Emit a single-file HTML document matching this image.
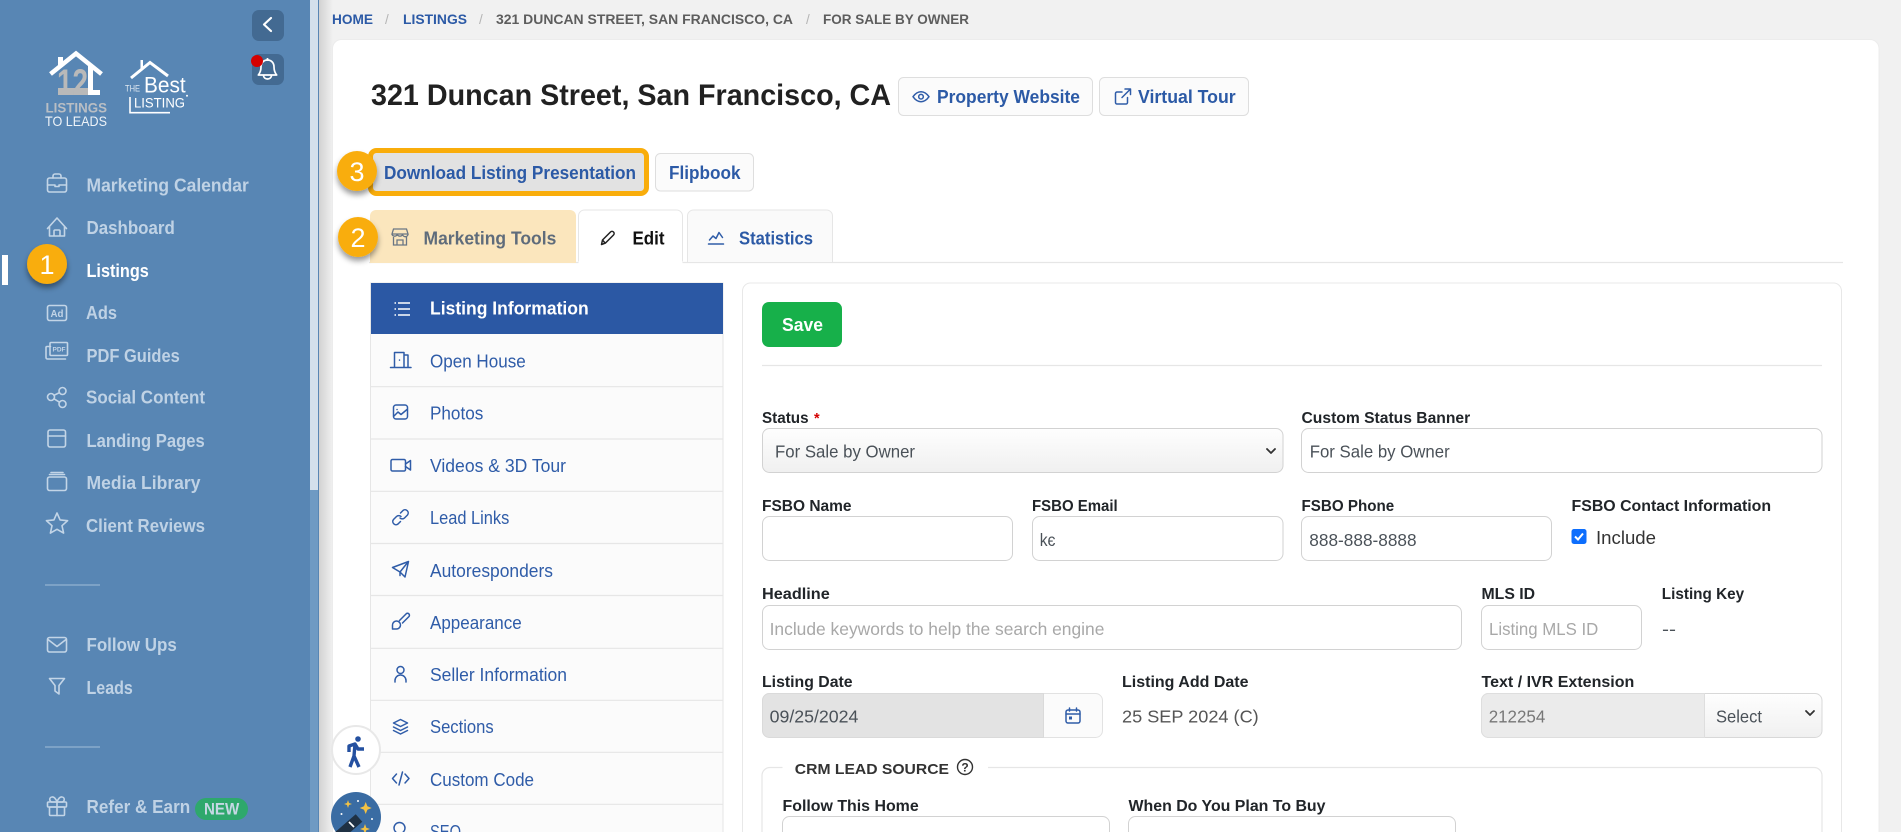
<!DOCTYPE html>
<html lang="en">
<head>
<meta charset="utf-8">
<title>321 Duncan Street, San Francisco, CA</title>
<style>
html,body{margin:0;padding:0;width:1901px;height:832px;overflow:hidden;background:#f1f1f1}
svg{display:block;position:absolute;left:0;top:0}
text{font-family:"Liberation Sans",sans-serif;white-space:pre}
.s{font-size:18.500px;font-weight:700;fill:#bfd2e5}
.n{font-size:18.500px;fill:#2f5ca8}
.l{font-size:15.500px;font-weight:700;fill:#212529}
.v{font-size:17.500px;fill:#4a5158}
.p{font-size:17.500px;fill:#a8a8a8}
.bl{font-size:18.500px;font-weight:700;fill:#2c5aa6}
.c{font-size:13.500px;font-weight:700;fill:#5d5d5d}
.d{font-size:27px;fill:#fff;text-anchor:middle}
.box{fill:#fff;stroke:#d2d2d2;stroke-width:1}
.si{fill:none;stroke:#c3d5e7;stroke-width:1.6;stroke-linecap:round;stroke-linejoin:round}
.ni{fill:none;stroke:#2f5ca8;stroke-width:1.5;stroke-linecap:round;stroke-linejoin:round}
.sep{stroke:#e6e6e6;stroke-width:1.2}
</style>
</head>
<body>
<svg width="1901" height="832" viewBox="0 0 1901 832" xmlns="http://www.w3.org/2000/svg">
<defs>
<linearGradient id="sh" x1="0" x2="1" y1="0" y2="0"><stop offset="0" stop-color="#d2d2d2"/><stop offset="1" stop-color="#f1f1f1"/></linearGradient>
<linearGradient id="sel" x1="0" x2="0" y1="0" y2="1"><stop offset="0" stop-color="#fefefe"/><stop offset="1" stop-color="#f0f0f0"/></linearGradient>
<filter id="ds" x="-40%" y="-40%" width="180%" height="180%"><feDropShadow dx="0" dy="4" stdDeviation="3" flood-color="#000" flood-opacity=".4"/></filter>
</defs>

<!-- page -->
<rect width="1901" height="832" fill="#f1f1f1"/>
<rect x="319" y="0" width="14" height="832" fill="url(#sh)"/>

<!-- sidebar -->
<rect x="0" y="0" width="310" height="832" fill="#5886b4"/>
<rect x="310" y="0" width="8" height="832" fill="#6f9ac3"/>
<rect x="310" y="0" width="8" height="490" fill="#d3e0ec"/>
<rect x="318" y="0" width="1" height="832" fill="#5886b4"/>

<rect x="252" y="10" width="32" height="31" rx="7" fill="#436a92"/>
<path d="M271 18L264 24.5L271 31" fill="none" stroke="#fff" stroke-width="2.2" stroke-linecap="round" stroke-linejoin="round"/>
<rect x="252" y="54" width="32" height="31" rx="7" fill="#436a92"/>
<path d="M267.500 60c-4 0-6.500 3-6.500 7c0 4-1 6-2.700 8h18.400c-1.700-2-2.700-4-2.700-8c0-4-2.500-7-6.500-7zM267.500 60v-2M263.500 75.500a4 3.500 0 0 0 8 0" fill="none" stroke="#fff" stroke-width="1.700" stroke-linejoin="round"/>
<circle cx="257" cy="61" r="6" fill="#d40000"/>

<!-- logos -->
<rect x="58" y="88" width="30" height="7" fill="#b9b9b9"/>
<text x="57" y="95" font-size="37" font-weight="700" fill="#b9b9b9" textLength="31" lengthAdjust="spacingAndGlyphs">12</text>
<path d="M88 66h5v24h7v5h-12z" fill="#fff"/>
<path d="M50.500 74L76 53.500L101.500 74" fill="none" stroke="#fff" stroke-width="4.500"/>
<rect x="58" y="57" width="5" height="10" fill="#fff"/>
<text x="45.500" y="112.700" font-size="14" font-weight="700" fill="#b9bec4" textLength="61.500" lengthAdjust="spacingAndGlyphs">LISTINGS</text>
<text x="45" y="126" font-size="14" fill="#eef3f8" textLength="62" lengthAdjust="spacingAndGlyphs">TO LEADS</text>
<path d="M131 78L150 62.500L168 76" fill="none" stroke="#fff" stroke-width="3"/>
<rect x="140.500" y="60" width="2.500" height="10" fill="#fff"/>
<text x="125" y="91.700" font-size="9.500" fill="#dfe8f1" textLength="15" lengthAdjust="spacingAndGlyphs">THE</text>
<text x="144" y="92.700" font-size="22" fill="#fff" textLength="41.700" lengthAdjust="spacingAndGlyphs">Best</text>
<text x="134" y="107.300" font-size="14" fill="#fff" textLength="51" lengthAdjust="spacingAndGlyphs">LISTING</text>
<circle cx="187" cy="95.700" r="1" fill="#fff"/>
<path d="M130 97v15.700h40" fill="none" stroke="#fff" stroke-width="1.600"/>

<!-- sidebar icons -->
<g class="si">
<rect x="47.500" y="178" width="19" height="14" rx="2"/><path d="M53 178v-2a2 2 0 0 1 2-2h4a2 2 0 0 1 2 2v2M47.500 185h7.500v1.500h4v-1.500h7.500"/>
<path d="M47.500 228.500L57 218l9.500 10.500M49.500 226.500v9.500h15v-9.500M54 236v-5a1 1 0 0 1 1-1h4a1 1 0 0 1 1 1v5"/>
<rect x="47.500" y="305.500" width="19" height="15" rx="2"/>
<path d="M50.500 346.500h-3.500a1 1 0 0 0-1 1v10a1.500 1.500 0 0 0 1.500 1.500h18M50 344v-0.500a1 1 0 0 1 1-1h15.500a1 1 0 0 1 1 1v11a1 1 0 0 1-1 1h-15.500a1 1 0 0 1-1-1z"/>
<circle cx="62.500" cy="391" r="3.500"/><circle cx="51" cy="397" r="3.500"/><circle cx="62.500" cy="404" r="3.500"/><path d="M54 395.300l5.500-2.700M54 398.800l5.500 3.400"/>
<rect x="48" y="430" width="17.500" height="17" rx="2"/><path d="M48 436h17.500"/>
<rect x="47.500" y="477" width="19" height="13.500" rx="2"/><path d="M49.500 474.500h15M51 472.500h12"/>
<path d="M57 513l3.100 6.900 7.500.8-5.600 5 1.600 7.400-6.600-3.800-6.600 3.800 1.600-7.400-5.600-5 7.500-.8z"/>
<rect x="47.500" y="637.500" width="19" height="14.500" rx="2"/><path d="M48 639.500l9 7 9-7"/>
<path d="M49.500 678.500h15l-5.500 7v8.500l-4-3v-5.500z"/>
<rect x="47.500" y="802" width="19" height="5" rx="1"/><rect x="49.500" y="807" width="15" height="8.500" rx="1"/><path d="M57 802v13.500M57 802c-1-3-3-5.500-5-5a2.500 2.500 0 0 0 .5 5zM57 802c1-3 3-5.500 5-5a2.500 2.500 0 0 1-.5 5z"/>
</g>
<text x="50.500" y="317" font-size="10" font-weight="700" fill="#c3d5e7" textLength="13" lengthAdjust="spacingAndGlyphs">Ad</text>
<text x="52.500" y="351.500" font-size="6.500" font-weight="700" fill="#c3d5e7" textLength="13" lengthAdjust="spacingAndGlyphs">PDF</text>

<text class="s" x="86.500" y="191.500" textLength="162.300" lengthAdjust="spacingAndGlyphs">Marketing Calendar</text>
<text class="s" x="86.500" y="234" textLength="88.300" lengthAdjust="spacingAndGlyphs">Dashboard</text>
<text class="s" x="86.500" y="277" textLength="62.300" lengthAdjust="spacingAndGlyphs" style="fill:#fff">Listings</text>
<text class="s" x="86" y="319" textLength="31" lengthAdjust="spacingAndGlyphs">Ads</text>
<text class="s" x="86.500" y="362" textLength="93.300" lengthAdjust="spacingAndGlyphs">PDF Guides</text>
<text class="s" x="86" y="403.500" textLength="119" lengthAdjust="spacingAndGlyphs">Social Content</text>
<text class="s" x="86.500" y="447" textLength="118.300" lengthAdjust="spacingAndGlyphs">Landing Pages</text>
<text class="s" x="86.500" y="489" textLength="114" lengthAdjust="spacingAndGlyphs">Media Library</text>
<text class="s" x="86" y="532" textLength="119" lengthAdjust="spacingAndGlyphs">Client Reviews</text>
<rect x="45" y="584" width="55" height="2" fill="#7da2c6"/>
<text class="s" x="86.500" y="651" textLength="90.300" lengthAdjust="spacingAndGlyphs">Follow Ups</text>
<text class="s" x="86.500" y="694" textLength="46.300" lengthAdjust="spacingAndGlyphs">Leads</text>
<rect x="45" y="746" width="55" height="2" fill="#7da2c6"/>
<text class="s" x="86.500" y="813" textLength="103.700" lengthAdjust="spacingAndGlyphs">Refer &amp; Earn</text>
<rect x="195" y="798" width="53" height="22" rx="11" fill="#2ea86c"/>
<text x="204" y="814.500" font-size="16.500" font-weight="700" fill="#c5d8e4" textLength="35.300" lengthAdjust="spacingAndGlyphs">NEW</text>

<rect x="2" y="255" width="6" height="30" fill="#fff"/>

<!-- breadcrumb -->
<text class="c" x="332" y="24" textLength="41" lengthAdjust="spacingAndGlyphs" style="fill:#2c5aa6">HOME</text>
<text class="c" x="385" y="24" style="font-weight:400;fill:#b5b5b5">/</text>
<text class="c" x="403" y="24" textLength="64" lengthAdjust="spacingAndGlyphs" style="fill:#2c5aa6">LISTINGS</text>
<text class="c" x="479" y="24" style="font-weight:400;fill:#b5b5b5">/</text>
<text class="c" x="496" y="24" textLength="297" lengthAdjust="spacingAndGlyphs">321 DUNCAN STREET, SAN FRANCISCO, CA</text>
<text class="c" x="806" y="24" style="font-weight:400;fill:#b5b5b5">/</text>
<text class="c" x="823" y="24" textLength="146" lengthAdjust="spacingAndGlyphs">FOR SALE BY OWNER</text>

<!-- card -->
<rect x="332.500" y="39.500" width="1546.500" height="830" rx="9" fill="#fff" stroke="#ececec"/>

<text x="371" y="105" font-size="30" font-weight="700" fill="#212121" textLength="520" lengthAdjust="spacingAndGlyphs">321 Duncan Street, San Francisco, CA</text>

<rect x="898.500" y="77.500" width="194" height="38" rx="5" fill="#fbfbfb" stroke="#dedede"/>
<path d="M913 96.700c2.300-3.300 5-5 8-5s5.700 1.700 8 5c-2.300 3.300-5 5-8 5s-5.700-1.700-8-5z" class="ni"/><circle cx="921" cy="96.700" r="2.300" class="ni"/>
<text class="bl" x="937" y="103" textLength="143" lengthAdjust="spacingAndGlyphs">Property Website</text>
<rect x="1099.500" y="77.500" width="149" height="38" rx="5" fill="#fbfbfb" stroke="#dedede"/>
<path d="M1122 92h-5a1.500 1.500 0 0 0-1.500 1.500v9a1.500 1.500 0 0 0 1.500 1.500h9a1.500 1.500 0 0 0 1.500-1.500v-5M1122 97.500l8.500-8.500M1125 89h5.500v5.500" class="ni"/>
<text class="bl" x="1138" y="103" textLength="97.700" lengthAdjust="spacingAndGlyphs">Virtual Tour</text>

<!-- action buttons -->
<rect x="370.500" y="150.500" width="276" height="43" rx="6" fill="#e2e2e2" stroke="#f9ad0b" stroke-width="5"/>
<text class="bl" x="384" y="179" textLength="252" lengthAdjust="spacingAndGlyphs">Download Listing Presentation</text>
<rect x="655.500" y="153.500" width="98" height="37.500" rx="5" fill="#fbfbfb" stroke="#dedede"/>
<text class="bl" x="669" y="179" textLength="71.500" lengthAdjust="spacingAndGlyphs">Flipbook</text>

<!-- tabs -->
<path d="M369 262.500H1843" class="sep"/>
<path d="M370 263v-47a6 6 0 0 1 6-6h194a6 6 0 0 1 6 6v47z" fill="#fbe6bd"/>
<path d="M578.500 263v-47a6 6 0 0 1 6-6h92a6 6 0 0 1 6 6v47" fill="#fff" stroke="#e6e6e6"/>
<rect x="578.500" y="261" width="104" height="3" fill="#fff"/>
<path d="M687.500 262v-46a6 6 0 0 1 6-6h133a6 6 0 0 1 6 6v46" fill="#fafafa" stroke="#e6e6e6"/>
<path d="M393.500 229h13l1.500 5h-16zM392 234a2.700 2.700 0 0 0 5.300 0a2.700 2.700 0 0 0 5.300 0a2.700 2.700 0 0 0 5.400 0M393.500 237v8h13v-8M397 245v-5h6v5" fill="none" stroke="#6a7684" stroke-width="1.300"/>
<text x="423.500" y="244.500" font-size="18.500" font-weight="700" fill="#5f6c7b" textLength="132.800" lengthAdjust="spacingAndGlyphs">Marketing Tools</text>
<path d="M601.500 244.500l1-4.500 8-8a2.100 2.100 0 0 1 3 3l-8 8zM602.500 240l3 3.500" fill="none" stroke="#222" stroke-width="1.500" stroke-linejoin="round"/>
<text x="632.500" y="244.500" font-size="18.500" font-weight="700" fill="#111" textLength="32" lengthAdjust="spacingAndGlyphs">Edit</text>
<path d="M709.500 240l3.500-4 3 2.500 3-6 3.500 5M708.500 244h15" class="ni"/>
<text x="739" y="244.500" font-size="18.500" font-weight="700" fill="#2c5aa6" textLength="74" lengthAdjust="spacingAndGlyphs">Statistics</text>

<!-- left list -->
<rect x="370.500" y="283" width="352.500" height="560" fill="#fbfbfb" stroke="#e6e6e6"/>
<rect x="371" y="283" width="352" height="51" fill="#2b58a4"/>
<path d="M398 303h12M398 309h12M398 315h12" stroke="#fff" stroke-width="1.400"/>
<path d="M394.500 303h1.500M394.500 309h1.500M394.500 315h1.500" stroke="#fff" stroke-width="1.600"/>
<text x="430" y="314.500" font-size="18.500" font-weight="700" fill="#fff" textLength="158.700" lengthAdjust="spacingAndGlyphs">Listing Information</text>
<g class="sep"><path d="M371 386.700H723M371 439H723M371 491.300H723M371 543.500H723M371 595.500H723M371 648.300H723M371 700.300H723M371 752.300H723M371 804.300H723"/></g>

<g class="ni">
<path d="M390.500 367.500h20.500M394.500 367v-14.500h9.500v14.500M404 355h4v12M399.500 360v.1"/>
<rect x="393.500" y="405" width="14" height="14" rx="2.500"/><path d="M394 416l4-4 3 2.500 6-5M397 409.500h.1"/>
<rect x="391" y="459.500" width="14.500" height="11.500" rx="1.500"/><path d="M405.500 464l5-3.500v9.500l-5-3.500"/>
<path d="M400.500 513l2.500-2.500a3.200 3.200 0 0 1 4.500 4.500l-3 3a3.200 3.200 0 0 1-4.500 0M401 516.500a3.200 3.200 0 0 0-4.500 0l-3 3a3.200 3.200 0 0 0 4.500 4.500l2.500-2.500"/>
<path d="M392.500 567.500l16-6-3.500 15.500-5-5zM400 572l8-10M400 572v3.500"/>
<path d="M399.500 620.500l6.500-6.500a1.800 1.800 0 0 1 3 2.500l-6.500 6.500M392.500 629v-4a4 4 0 1 1 4 4z"/>
<circle cx="400.500" cy="670" r="3.500"/><path d="M395 682v-1.500a5.500 5.500 0 0 1 11 0v1.500"/>
<path d="M400.500 719.500l7 3.500-7 3.500-7-3.500zM393.500 727l7 3.500 7-3.500M393.500 730.500l7 3.500 7-3.500"/>
<path d="M396.500 774l-4 4.500 4 4.500M405 774l4 4.500-4 4.500M402.500 772l-3.500 13"/>
<circle cx="399.500" cy="828" r="5.500"/><path d="M403.500 832l3.500 3.500"/>
</g>

<text class="n" x="430" y="367.500" textLength="95.700" lengthAdjust="spacingAndGlyphs">Open House</text>
<text class="n" x="430" y="419.500" textLength="53.300" lengthAdjust="spacingAndGlyphs">Photos</text>
<text class="n" x="430" y="472" textLength="136" lengthAdjust="spacingAndGlyphs">Videos &amp; 3D Tour</text>
<text class="n" x="430" y="524" textLength="79.300" lengthAdjust="spacingAndGlyphs">Lead Links</text>
<text class="n" x="430" y="577" textLength="123" lengthAdjust="spacingAndGlyphs">Autoresponders</text>
<text class="n" x="430" y="629" textLength="91.700" lengthAdjust="spacingAndGlyphs">Appearance</text>
<text class="n" x="430" y="681" textLength="137" lengthAdjust="spacingAndGlyphs">Seller Information</text>
<text class="n" x="430" y="733" textLength="63.700" lengthAdjust="spacingAndGlyphs">Sections</text>
<text class="n" x="430" y="786" textLength="104" lengthAdjust="spacingAndGlyphs">Custom Code</text>
<text class="n" x="430" y="838" textLength="31" lengthAdjust="spacingAndGlyphs">SEO</text>

<!-- form panel -->
<rect x="742.500" y="283" width="1099" height="590" rx="8" fill="#fff" stroke="#e8e8e8"/>
<rect x="762" y="302" width="80" height="45" rx="7" fill="#17b04a"/>
<text x="782" y="331" font-size="18.500" font-weight="700" fill="#fff" textLength="41" lengthAdjust="spacingAndGlyphs">Save</text>
<path d="M762 365.500H1822" class="sep"/>

<text class="l" x="762" y="423" textLength="46.600" lengthAdjust="spacingAndGlyphs">Status</text>
<text x="814" y="423" font-size="14.500" font-weight="700" fill="#d40000">*</text>
<text class="l" x="1301.500" y="423" textLength="168.700" lengthAdjust="spacingAndGlyphs">Custom Status Banner</text>
<rect x="762.500" y="428.500" width="520.500" height="44" rx="7" fill="url(#sel)" stroke="#d2d2d2"/>
<text class="v" x="775" y="457.500" textLength="140" lengthAdjust="spacingAndGlyphs">For Sale by Owner</text>
<path d="M1267 449l4 4 4-4" fill="none" stroke="#333" stroke-width="1.800" stroke-linecap="round" stroke-linejoin="round"/>
<rect class="box" x="1301.500" y="428.500" width="520.500" height="44" rx="7"/>
<text class="v" x="1309.700" y="457.500" textLength="140" lengthAdjust="spacingAndGlyphs">For Sale by Owner</text>

<text class="l" x="762" y="511" textLength="89.500" lengthAdjust="spacingAndGlyphs">FSBO Name</text>
<text class="l" x="1032" y="511" textLength="85.700" lengthAdjust="spacingAndGlyphs">FSBO Email</text>
<text class="l" x="1301.500" y="511" textLength="92.700" lengthAdjust="spacingAndGlyphs">FSBO Phone</text>
<text class="l" x="1571.500" y="511" textLength="199.600" lengthAdjust="spacingAndGlyphs">FSBO Contact Information</text>
<rect class="box" x="762.500" y="516.500" width="250" height="44" rx="7"/>
<rect class="box" x="1032.500" y="516.500" width="250.500" height="44" rx="7"/>
<text class="v" x="1039.700" y="546" textLength="15.800" lengthAdjust="spacingAndGlyphs">kє</text>
<rect class="box" x="1301.500" y="516.500" width="250" height="44" rx="7"/>
<text class="v" x="1309.300" y="546" textLength="107.300" lengthAdjust="spacingAndGlyphs">888-888-8888</text>
<rect x="1571.500" y="529" width="15" height="15" rx="2.500" fill="#0d6efd"/>
<path d="M1575 536.500l3 3 5-6" fill="none" stroke="#fff" stroke-width="2"/>
<text x="1596" y="544" font-size="18.500" fill="#333" textLength="60" lengthAdjust="spacingAndGlyphs">Include</text>

<text class="l" x="762" y="599" textLength="67.800" lengthAdjust="spacingAndGlyphs">Headline</text>
<text class="l" x="1481.500" y="599" textLength="53.600" lengthAdjust="spacingAndGlyphs">MLS ID</text>
<text class="l" x="1661.800" y="599" textLength="82.300" lengthAdjust="spacingAndGlyphs">Listing Key</text>
<rect class="box" x="762.500" y="605.500" width="699" height="44" rx="7"/>
<text class="p" x="769.600" y="635" textLength="334.800" lengthAdjust="spacingAndGlyphs">Include keywords to help the search engine</text>
<rect class="box" x="1481.500" y="605.500" width="160" height="44" rx="7"/>
<text class="p" x="1489" y="635" textLength="109.300" lengthAdjust="spacingAndGlyphs">Listing MLS ID</text>
<text class="v" x="1662" y="635" textLength="14" lengthAdjust="spacingAndGlyphs">--</text>

<text class="l" x="762" y="687" textLength="90.600" lengthAdjust="spacingAndGlyphs">Listing Date</text>
<text class="l" x="1122" y="687" textLength="126.500" lengthAdjust="spacingAndGlyphs">Listing Add Date</text>
<text class="l" x="1481.500" y="687" textLength="152.800" lengthAdjust="spacingAndGlyphs">Text / IVR Extension</text>
<rect x="762.500" y="693.500" width="340" height="44" rx="7" fill="#fbfbfb" stroke="#e2e2e2"/>
<path d="M1043.500 693.500h-274a7 7 0 0 0-7 7v30a7 7 0 0 0 7 7h274z" fill="#e3e3e3" stroke="#dadada"/>
<text class="v" x="769.600" y="722.500" textLength="88.800" lengthAdjust="spacingAndGlyphs">09/25/2024</text>
<rect x="1066" y="710" width="14" height="13" rx="2" class="ni"/><path d="M1066 714h14M1069.500 708v3M1076.500 708v3" class="ni"/><rect x="1069" y="716.500" width="3" height="3" fill="#2f5ca8"/>
<text x="1122" y="722.500" font-size="17.500" fill="#555" textLength="136.700" lengthAdjust="spacingAndGlyphs">25 SEP 2024 (C)</text>
<rect x="1481.500" y="693.500" width="340.500" height="44" rx="7" fill="url(#sel)" stroke="#d8d8d8"/>
<path d="M1704.500 693.500h-216a7 7 0 0 0-7 7v30a7 7 0 0 0 7 7h216z" fill="#ebebeb" stroke="#dedede"/>
<text x="1488.700" y="722.500" font-size="17.500" fill="#777" textLength="56.600" lengthAdjust="spacingAndGlyphs">212254</text>
<text class="v" x="1716" y="722.500" textLength="46" lengthAdjust="spacingAndGlyphs">Select</text>
<path d="M1806 711l4 4 4-4" fill="none" stroke="#333" stroke-width="1.800" stroke-linecap="round" stroke-linejoin="round"/>

<!-- CRM fieldset -->
<path d="M782.500 767.500H770a8 8 0 0 0-8 8V860M988 767.500H1814a8 8 0 0 1 8 8V860" fill="none" stroke="#e6e6e6" stroke-width="1.200"/>
<text x="794.800" y="774" font-size="15" font-weight="700" fill="#333" textLength="154.200" lengthAdjust="spacingAndGlyphs">CRM LEAD SOURCE</text>
<circle cx="965" cy="767" r="7.500" fill="none" stroke="#333" stroke-width="1.400"/>
<text x="965" y="771.500" font-size="12" font-weight="700" fill="#333" text-anchor="middle">?</text>
<text class="l" x="782.500" y="811" textLength="136.200" lengthAdjust="spacingAndGlyphs">Follow This Home</text>
<text class="l" x="1128.500" y="811" textLength="197" lengthAdjust="spacingAndGlyphs">When Do You Plan To Buy</text>
<rect class="box" x="782.500" y="816.500" width="327" height="44" rx="7"/>
<rect class="box" x="1128.500" y="816.500" width="327" height="44" rx="7"/>

<!-- numbered badges -->
<g filter="url(#ds)"><circle cx="47" cy="264" r="20" fill="#f9ad0b"/></g>
<text class="d" x="47" y="274">1</text>
<g filter="url(#ds)"><circle cx="358" cy="237" r="20" fill="#f9ad0b"/></g>
<text class="d" x="358" y="247">2</text>
<g filter="url(#ds)"><circle cx="357" cy="171" r="20" fill="#f9ad0b"/></g>
<text class="d" x="357" y="181">3</text>

<!-- accessibility widgets -->
<circle cx="356" cy="750" r="24" fill="#fff" stroke="#e8e8e8" stroke-width="2"/>
<circle cx="358" cy="739" r="2.800" fill="#2450a0"/>
<path d="M349 752v-6l6-2 3 5h6M355 744l-1 12M354 756l-4 11M354 756l5 11" fill="none" stroke="#2450a0" stroke-width="3.400" stroke-linejoin="round"/>
<circle cx="356" cy="817" r="25" fill="#3a6ca3"/>
<path d="M365.700 802l1.700 4.300 4.300 1.700-4.300 1.700-1.700 4.300-1.700-4.300-4.300-1.700 4.300-1.700zM348 800l1 3 3 1-3 1-1 3-1-3-3-1 3-1zM365 824l1.300 3.700 3.700 1.300-3.700 1.300-1.300 3.700-1.300-3.700-3.700-1.300 3.700-1.300z" fill="#f3c244"/>
<circle cx="358" cy="801" r="1" fill="#fff"/><circle cx="341.500" cy="814" r="1" fill="#fff"/><circle cx="372" cy="819" r="1" fill="#fff"/>
<path d="M336 838l23-20" stroke="#1f3144" stroke-width="10"/>
<path d="M349 822l5 5" stroke="#fff" stroke-width="1.800"/>
</svg>
</body>
</html>
